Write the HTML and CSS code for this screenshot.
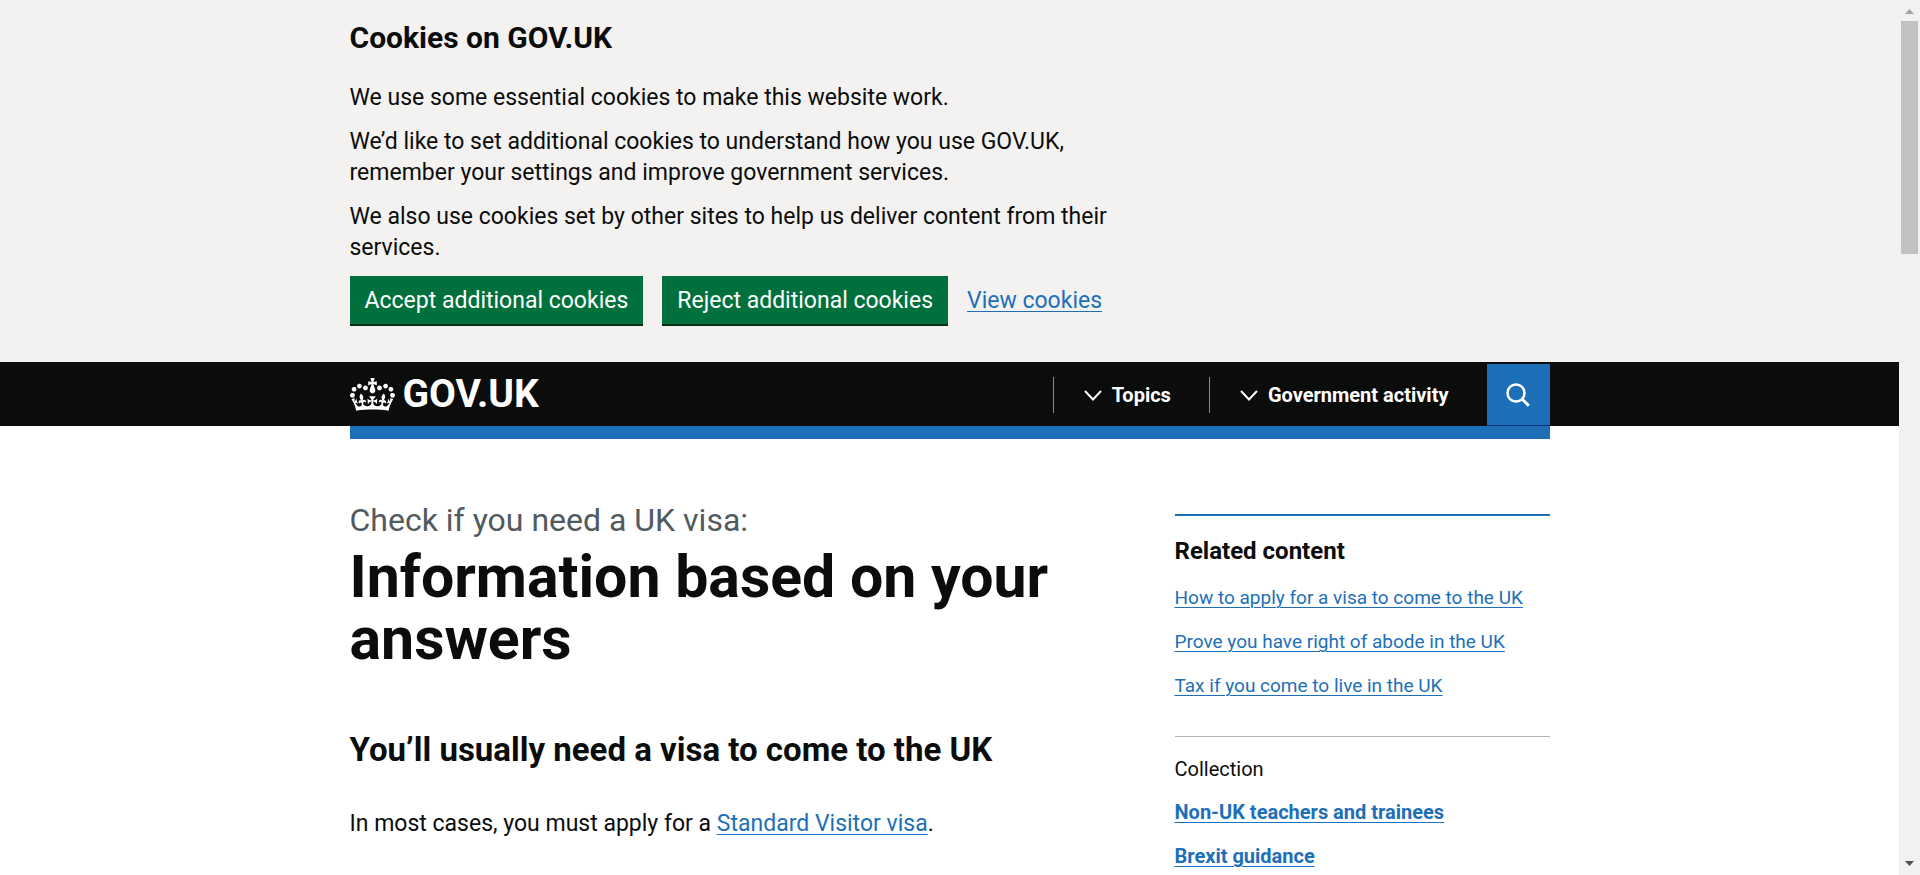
FILE: index.html
```html
<!DOCTYPE html>
<html lang="en">
<head>
<meta charset="utf-8">
<meta name="viewport" content="width=device-width, initial-scale=1">
<title>Information based on your answers - Check if you need a UK visa - GOV.UK</title>
<link rel="stylesheet" href="styles.css">
</head>
<body>
<div class="window">
  <div class="page">
    <section class="cookie-banner" aria-label="Cookies on GOV.UK">
      <div class="container">
        <div class="cookie-text">
          <h2 class="cookie-title">Cookies on GOV.UK</h2>
          <p>We use some essential cookies to make this website work.</p>
          <p>We’d like to set additional cookies to understand how you use GOV.UK, remember your settings and improve government services.</p>
          <p>We also use cookies set by other sites to help us deliver content from their services.</p>
        </div>
        <div class="cookie-actions">
          <button class="button" type="button">Accept additional cookies</button>
          <button class="button" type="button">Reject additional cookies</button>
          <a class="link" href="#cookies">View cookies</a>
        </div>
      </div>
    </section>

    <header class="header">
      <div class="container header-row">
        <a class="logo" href="#home">
          <svg class="crown" viewBox="0 0 132 97" aria-hidden="true"><path fill="currentColor" d="M25 30.2c3.5 1.5 7.7-.2 9.1-3.7 1.5-3.6-.2-7.8-3.9-9.2-3.6-1.4-7.6.3-9.1 3.9-1.4 3.5.3 7.5 3.9 9zM9 39.5c3.6 1.5 7.8-.2 9.2-3.7 1.5-3.6-.2-7.8-3.9-9.1-3.6-1.5-7.6.2-9.1 3.8-1.4 3.5.3 7.5 3.8 9zM4.4 57.2c3.5 1.5 7.7-.2 9.1-3.8 1.5-3.6-.2-7.7-3.9-9.1-3.5-1.5-7.6.3-9.1 3.8-1.4 3.5.3 7.6 3.9 9.1zm38.3-21.4c3.5 1.5 7.7-.2 9.1-3.8 1.5-3.6-.2-7.7-3.9-9.1-3.6-1.5-7.6.3-9.1 3.8-1.3 3.6.4 7.7 3.9 9.1zm64.4-5.6c-3.6 1.5-7.8-.2-9.1-3.7-1.5-3.6.2-7.8 3.8-9.2 3.6-1.4 7.7.3 9.2 3.9 1.3 3.5-.4 7.5-3.9 9zm15.9 9.3c-3.6 1.5-7.7-.2-9.1-3.7-1.5-3.6.2-7.8 3.7-9.1 3.6-1.5 7.7.2 9.2 3.8 1.5 3.5-.3 7.5-3.8 9zm4.7 17.7c-3.6 1.5-7.8-.2-9.2-3.8-1.5-3.6.2-7.7 3.9-9.1 3.6-1.5 7.7.3 9.2 3.8 1.3 3.5-.4 7.6-3.9 9.1zM89.3 35.8c-3.6 1.5-7.8-.2-9.2-3.8-1.4-3.6.2-7.7 3.9-9.1 3.6-1.5 7.7.3 9.2 3.8 1.4 3.6-.3 7.7-3.9 9.1zM69.7 17.7l8.9 4.7V9.3l-8.9 2.8c-.2-.3-.5-.6-.9-.9L72.4 0H59.6l3.5 11.2c-.3.3-.6.5-.9.9l-8.8-2.8v13.1l8.8-4.7c.3.3.6.7.9.9l-5 15.4v.1c-.2.8-.4 1.6-.4 2.4 0 4.1 3.1 7.5 7 8.1h.2c.3 0 .7.1 1 .1.4 0 .7 0 1-.1h.2c4-.6 7.1-4.1 7.1-8.1 0-.8-.1-1.7-.4-2.4V34l-5.1-15.4c.4-.2.7-.6 1-.9zM66 92.8c16.9 0 32.8 1.1 47.1 3.2 4-16.9 8.9-26.7 14-33.5l-9.6-3.4c1 4.9 1.1 7.2 0 10.2-1.5-1.4-3-4.3-4.2-8.7L108.6 76c2.8-2 5-3.2 7.5-3.3-4.4 9.4-10 11.9-13.6 11.2-4.3-.8-6.3-4.6-5.6-7.9 1-4.7 5.7-5.9 8-.5 4.3-8.7-3-11.4-7.6-8.8 7.1-7.2 7.9-13.5 2.1-21.1-8 6.1-8.1 12.3-4.5 20.8-4.7-5.4-12.1-2.5-9.5 6.2 3.4-5.2 7.9-2 7.2 3.1-.6 4.3-6.4 7.8-13.5 7.2-10.3-.9-10.9-8-11.2-13.8 2.5-.5 7.1 1.8 11 7.3L80.2 60c-4.1 4.4-8 5.3-12.3 5.4 1.4-4.4 8-11.6 8-11.6H55.5s6.4 7.2 7.9 11.6c-4.2-.1-8-1-12.3-5.4l1.4 16.4c3.9-5.5 8.5-7.7 10.9-7.3-.3 5.8-.9 12.8-11.1 13.8-7.2.6-12.9-2.9-13.5-7.2-.7-5 3.8-8.3 7.1-3.1 2.7-8.7-4.6-11.6-9.4-6.2 3.7-8.5 3.6-14.7-4.6-20.8-5.8 7.6-5 13.9 2.2 21.1-4.7-2.6-11.9.1-7.7 8.8 2.3-5.5 7.1-4.2 8.1.5.7 3.3-1.3 7.1-5.7 7.9-3.5.7-9-1.8-13.5-11.2 2.5.1 4.7 1.3 7.5 3.3l-4.7-15.4c-1.2 4.4-2.7 7.2-4.3 8.7-1.1-3-.9-5.3 0-10.2l-9.5 3.4c5 6.9 9.9 16.7 14 33.5 14.8-2.1 30.8-3.2 47.7-3.2z"/></svg>
          <span>GOV.UK</span>
        </a>
        <nav class="nav" aria-label="Menu">
          <button class="nav-item" type="button">
            <svg class="chevron" viewBox="0 0 18 11" aria-hidden="true"><path d="M1 1l8 8.500l8-8.500" fill="none" stroke="currentColor" stroke-width="2"/></svg>
            <span>Topics</span>
          </button>
          <button class="nav-item" type="button">
            <svg class="chevron" viewBox="0 0 18 11" aria-hidden="true"><path d="M1 1l8 8.500l8-8.500" fill="none" stroke="currentColor" stroke-width="2"/></svg>
            <span>Government activity</span>
          </button>
          <button class="search" type="button" aria-label="Search GOV.UK">
            <svg class="search-icon" viewBox="0 0 24 24" aria-hidden="true"><g fill="none" stroke="currentColor" stroke-width="2.500"><circle cx="10" cy="10" r="8.500"/><path d="M15.800 15.800l7 7" stroke-width="3"/></g></svg>
          </button>
        </nav>
      </div>
    </header>
    <div class="container"><div class="blue-bar"></div></div>

    <div class="container content">
      <main class="main">
        <p class="caption">Check if you need a UK visa:</p>
        <h1 class="title">Information based on your answers</h1>
        <h2 class="subtitle">You’ll usually need a visa to come to the UK</h2>
        <p class="body-text">In most cases, you must apply for a <a class="link" href="#standard-visitor">Standard Visitor visa</a>.</p>
      </main>
      <aside class="sidebar">
        <h2 class="sidebar-title">Related content</h2>
        <ul class="list">
          <li><a class="link" href="#apply">How to apply for a visa to come to the UK</a></li>
          <li><a class="link" href="#abode">Prove you have right of abode in the UK</a></li>
          <li><a class="link" href="#tax">Tax if you come to live in the UK</a></li>
        </ul>
        <h3 class="collection-title">Collection</h3>
        <ul class="list list-bold">
          <li><a class="link" href="#teachers">Non-UK teachers and trainees</a></li>
          <li><a class="link" href="#brexit">Brexit guidance</a></li>
        </ul>
      </aside>
    </div>
  </div>

  <div class="scrollbar" aria-hidden="true">
    <svg class="arrow arrow-up" viewBox="0 0 9 5"><path d="M0 5L4.500 0L9 5z" fill="currentColor"/></svg>
    <div class="track"><div class="thumb"></div></div>
    <svg class="arrow arrow-down" viewBox="0 0 9 5"><path d="M0 0L4.500 5L9 0z" fill="currentColor"/></svg>
  </div>
</div>
</body>
</html>
```
FILE: styles.css
```css
* { box-sizing: border-box; }

body {
  margin: 0;
  background: #fff;
  color: #0b0c0c;
  font-family: Roboto, "Liberation Sans", sans-serif;
  font-size: 23px;
  line-height: 31px;
}

h1, h2, h3, p, ul { margin: 0; padding: 0; }
ul { list-style: none; }
button { margin: 0; border: 0; font-family: inherit; cursor: pointer; }

.window { display: flex; height: 100vh; }
.page { flex: 1; min-width: 0; overflow: hidden; }
.container { max-width: 1200px; margin: 0 auto; }

.link {
  color: #1d70b8;
  text-decoration: underline;
  text-decoration-thickness: 1px;
  text-underline-offset: 3px;
}

/* Cookie banner */
.cookie-banner { background: #f3f2f1; padding: 19px 0 38px; }
.cookie-text { max-width: 780px; }
.cookie-text p { margin-bottom: 13px; }
.cookie-title { font-size: 30px; line-height: 38px; margin-bottom: 25px; }
.cookie-actions { display: flex; align-items: center; flex-wrap: wrap; gap: 19px; }
.button {
  height: 48px;
  padding: 0 15px;
  background: #00703c;
  color: #fff;
  font-size: 23px;
  line-height: 31px;
  box-shadow: 0 2px 0 #002d18;
}

/* Header */
.header { background: #0b0c0c; color: #fff; }
.header-row { display: flex; justify-content: space-between; align-items: center; height: 64px; }
.logo {
  display: flex;
  align-items: center;
  gap: 8px;
  color: #fff;
  font-size: 39px;
  font-weight: 700;
  text-decoration: none;
}
.crown { width: 45px; height: 33px; }
.nav { display: flex; align-items: center; padding-top: 2px; }
.nav-item {
  display: flex;
  align-items: center;
  gap: 10px;
  height: 36px;
  padding: 0 38px 0 30px;
  border-left: 1px solid #85898c;
  background: none;
  color: #fff;
  font-size: 20px;
  font-weight: 700;
}
.chevron { width: 18px; height: 11px; }
.search {
  display: grid;
  place-items: center;
  width: 63px;
  height: 62px;
  padding: 0;
  background: #1d70b8;
  border-bottom: 1px solid #003078;
  color: #fff;
}
.search-icon { width: 24px; height: 24px; }
.blue-bar { height: 13px; background: #1d70b8; }

/* Content */
.content { display: grid; grid-template-columns: 2fr 1fr; gap: 38px; padding-top: 60px; }
.caption { color: #505a5f; font-size: 32px; line-height: 42px; margin-bottom: 5px; }
.title { font-size: 59px; line-height: 62px; margin-bottom: 59px; }
.subtitle { font-size: 33px; line-height: 42px; margin-bottom: 37px; }

.sidebar { margin-top: 15px; padding-top: 20px; border-top: 2px solid #1d70b8; width: 375px; justify-self: end; align-self: start; }
.sidebar-title { font-size: 24px; line-height: 31px; margin-bottom: 18px; }
.list { display: grid; gap: 19px; font-size: 19px; line-height: 25px; }
.list-bold { font-size: 20px; font-weight: 700; }
.collection-title {
  margin: 38px 0 18px;
  padding-top: 20px;
  border-top: 1px solid #b1b4b6;
  font-size: 20px;
  line-height: 25px;
  font-weight: 400;
}

/* Scrollbar */
.scrollbar {
  display: flex;
  flex-direction: column;
  align-items: center;
  width: 21px;
  padding: 9px 0;
  background: #f1f1f1;
}
.arrow { width: 9px; height: 5px; flex: none; }
.arrow-up { color: #a3a3a3; }
.arrow-down { color: #505050; }
.track { flex: 1; width: 17px; padding: 7px 0; }
.thumb { height: 28%; background: #c1c1c1; }
```
